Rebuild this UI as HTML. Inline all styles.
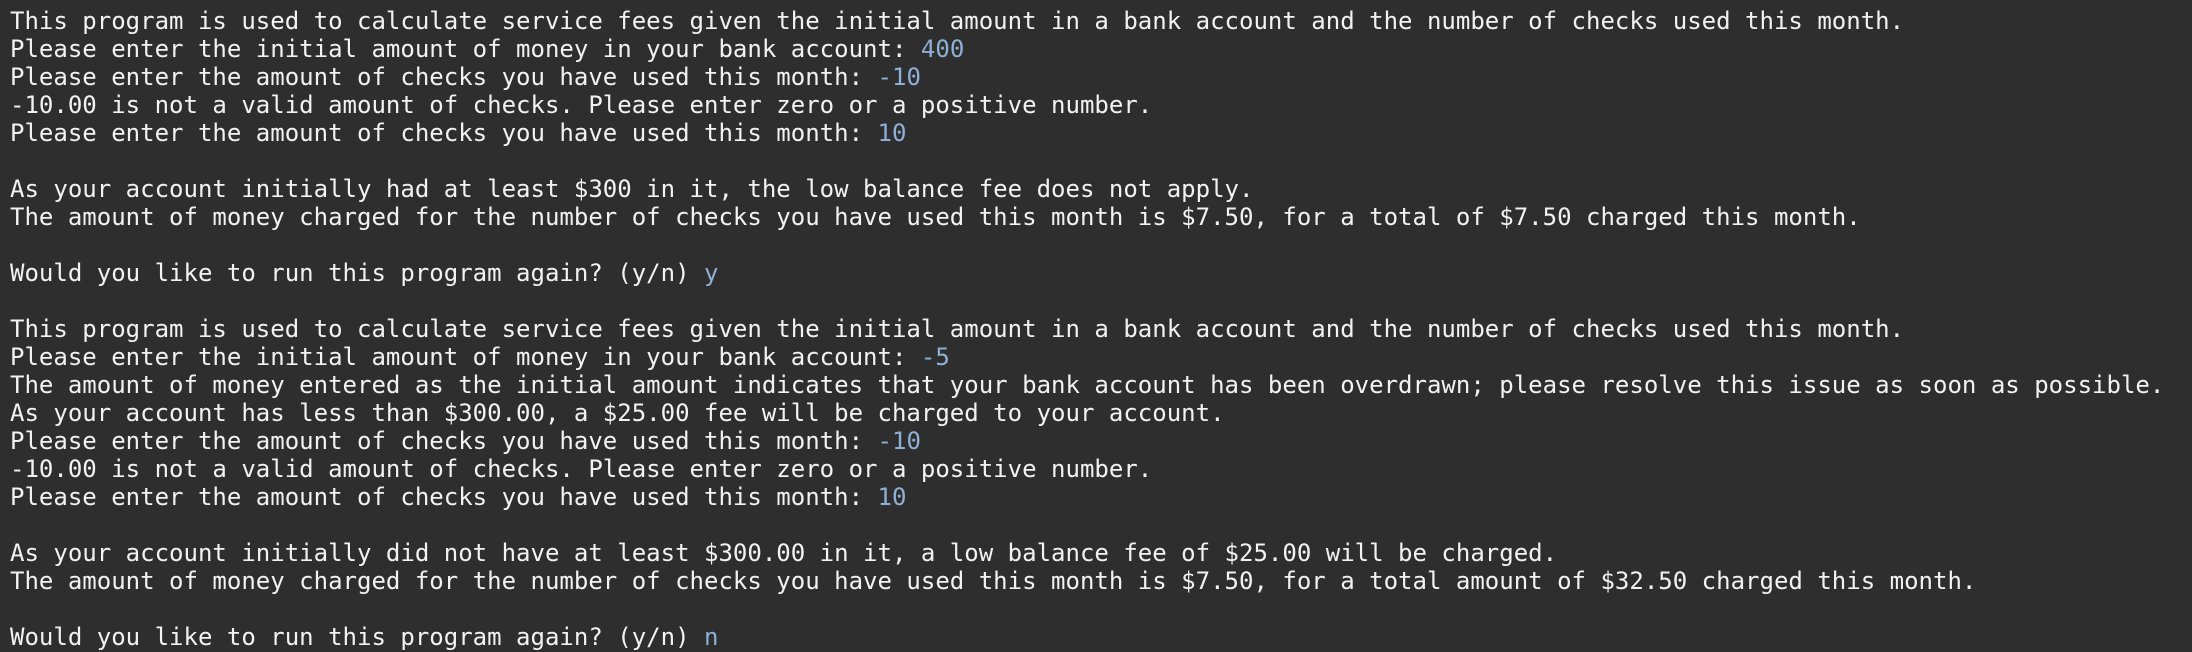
<!DOCTYPE html>
<html><head><style>
html,body{margin:0;padding:0;background:#2e2e2e;width:2192px;height:652px;overflow:hidden}
pre{margin:0;padding:7px 0 0 10px;font-family:"DejaVu Sans Mono","Liberation Mono",monospace;font-size:24.03px;line-height:28px;color:#f2f2f2}
b{font-weight:normal;color:#8fb0d6}
</style></head><body><pre>This program is used to calculate service fees given the initial amount in a bank account and the number of checks used this month.
Please enter the initial amount of money in your bank account: <b>400</b>
Please enter the amount of checks you have used this month: <b>-10</b>
-10.00 is not a valid amount of checks. Please enter zero or a positive number.
Please enter the amount of checks you have used this month: <b>10</b>

As your account initially had at least $300 in it, the low balance fee does not apply.
The amount of money charged for the number of checks you have used this month is $7.50, for a total of $7.50 charged this month.

Would you like to run this program again? (y/n) <b>y</b>

This program is used to calculate service fees given the initial amount in a bank account and the number of checks used this month.
Please enter the initial amount of money in your bank account: <b>-5</b>
The amount of money entered as the initial amount indicates that your bank account has been overdrawn; please resolve this issue as soon as possible.
As your account has less than $300.00, a $25.00 fee will be charged to your account.
Please enter the amount of checks you have used this month: <b>-10</b>
-10.00 is not a valid amount of checks. Please enter zero or a positive number.
Please enter the amount of checks you have used this month: <b>10</b>

As your account initially did not have at least $300.00 in it, a low balance fee of $25.00 will be charged.
The amount of money charged for the number of checks you have used this month is $7.50, for a total amount of $32.50 charged this month.

Would you like to run this program again? (y/n) <b>n</b></pre></body></html>
